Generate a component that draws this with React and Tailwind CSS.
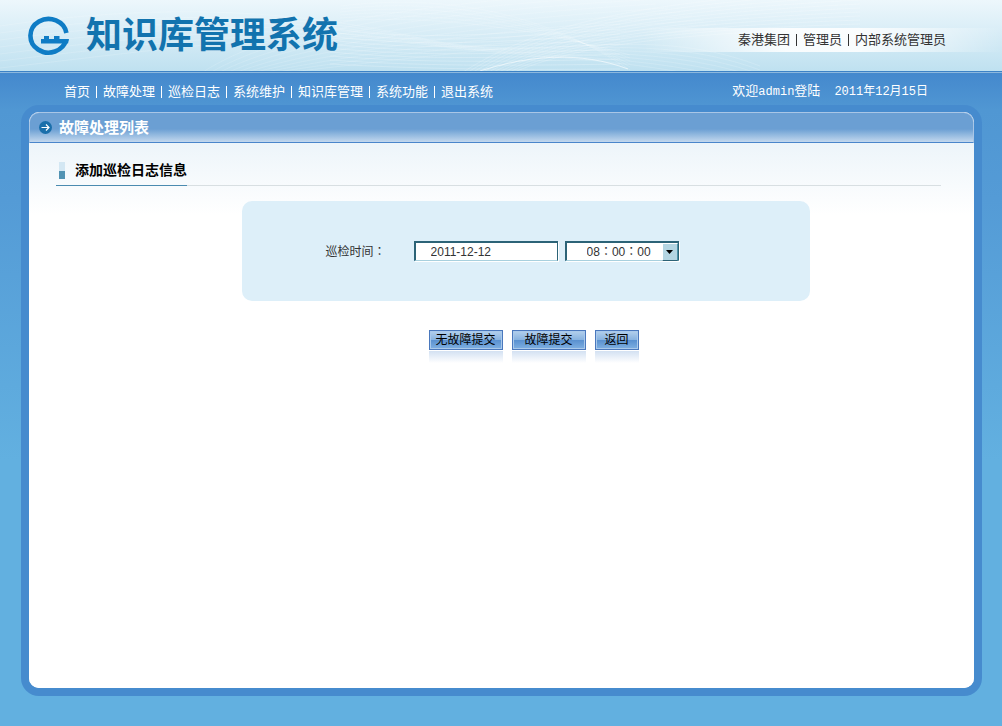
const CJK = 'font-["Liberation_Sans","Noto_Sans_CJK_SC",sans-serif]';

const NAV = ["首页", "故障处理", "巡检日志", "系统维护", "知识库管理", "系统功能", "退出系统"];
const ACCOUNT = ["秦港集团", "管理员", "内部系统管理员"];

function Waves() {
  const families = [
    { n: 7, d: (i) => `M0 ${26 + i * 7} C160 ${2 + i * 8} 300 ${10 + i * 3} 420 ${38 + i} S640 ${20 + i * 6} 760 ${66 + i * 4}`, o: 0.2 },
    { n: 10, d: (i) => `M${200 + i * 8} ${74} C${250 + i * 10} ${40 + i * 3} ${360 + i * 12} ${4 + i * 5} ${620 + i * 12} ${-8 + i * 4}`, o: 0.18 },
    { n: 11, d: (i) => `M${460 + i * 5} 74 C${540 + i * 4} ${22 + i * 2} ${640 + i * 6} ${2 + i * 3} 860 ${-12 + i * 4}`, o: 0.25 },
    { n: 10, d: (i) => `M330 ${28 + i * 4} C420 ${42 + i * 3} 500 ${34 + i * 4} 620 ${24 + i * 5}`, o: 0.28 },
    { n: 6, d: (i) => `M340 ${6 + i * 3} C440 ${-6 + i * 4} 540 ${10 + i * 4} 630 ${70 - i * 3}`, o: 0.18 },
  ];
  return (
    <svg aria-hidden="true" viewBox="0 0 1002 71" preserveAspectRatio="none" className="absolute inset-0 h-full w-full" fill="none" stroke="#fff">
      {families.map((f, k) =>
        Array.from({ length: f.n }, (_, i) => <path key={`${k}-${i}`} d={f.d(i)} strokeOpacity={f.o} strokeWidth="0.8" />)
      )}
      <path d="M480 71 C530 55 580 51 628 69" strokeOpacity="0.6" strokeWidth="1" />
    </svg>
  );
}

function Logo() {
  return (
    <svg aria-hidden="true" viewBox="0 0 42 40" className="h-10 w-[42px] shrink-0">
      <path d="M38.4 17 A18.1 16.8 0 1 0 38.2 23.5" fill="none" stroke="#0f7cc5" strokeWidth="4.6" />
      <path d="M13 23 H16 V20 H21 V23 H26 V20 H31.5 V23 H41 L40 27.5 H13 Z" fill="#0f7cc5" />
    </svg>
  );
}

function Separated({ items, label }) {
  return (
    <nav aria-label={label}>
      <ul className="flex items-center text-[13px] leading-4 whitespace-nowrap">
        {items.map((t, i) => (
          <li key={t} className="flex items-center">
            {i > 0 && <span className="mx-1.5 h-3 w-px bg-current" />}
            <a href="#" className="hover:underline">{t}</a>
          </li>
        ))}
      </ul>
    </nav>
  );
}

function GlossButton({ children, className }) {
  return (
    <div>
      <button
        type="button"
        className={`block h-5 border border-[#4a78bd] bg-[linear-gradient(#b4d0ec,#86b2e0_50%,#5a91d0_52%,#7fb0e2)] text-xs leading-4 text-black shadow-[inset_0_0_0_1px_#a9c9eb] ${className}`}
      >
        {children}
      </button>
      <div className="mt-px h-3 bg-linear-to-b from-[#d3e1f2] to-white" />
    </div>
  );
}

export default function App() {
  return (
    <div className={`flex min-h-screen flex-col bg-[#62b0e0] bg-[linear-gradient(#4488cd_72px,#5097d3_110px,#549bd6_200px,#62b0e0_460px)] ${CJK}`}>
      <header className="relative flex h-[71px] items-center justify-between bg-linear-to-b from-[#edf7fc] to-[#bfe1f0]">
        <Waves />
        <div className="relative flex items-center gap-4 pl-7">
          <Logo />
          <h1 className="text-4xl font-bold whitespace-nowrap text-[#1273ae]">知识库管理系统</h1>
        </div>
        <div className="relative mt-2 flex h-6 items-center bg-[linear-gradient(90deg,transparent,#ffffffe0_40%,#ffffffe0_60%,transparent)] pr-14 pl-24 text-[#333]">
          <Separated items={ACCOUNT} label="账户" />
        </div>
      </header>

      <div className="flex h-[34px] items-center justify-between border-t border-[#3d82c6] pt-1.5 pr-[74px] pl-16 text-white shadow-[inset_0_1px_0_#8db8dd]">
        <Separated items={NAV} label="主导航" />
        <div className="flex items-center gap-3.5 text-[13px] leading-4 whitespace-nowrap">
          <span>欢迎<span className='font-["Liberation_Mono",monospace] text-xs leading-4'>admin</span>登陆</span>
          <time dateTime="2011-12-15" className='font-["Liberation_Mono","Noto_Sans_CJK_SC",monospace] text-xs leading-[18px]'>2011年12月15日</time>
        </div>
      </div>

      <div className="mr-5 mb-[30px] ml-[21px] flex flex-1 flex-col rounded-[18px] bg-[#468bce] px-2 pt-[7px] pb-2">
        <main className="flex flex-1 flex-col overflow-hidden rounded-[10px] bg-white">
          <div className="flex h-[31px] items-center gap-[7px] rounded-t-[10px] border border-b-[#4a86cb] border-[#a9c6e6] bg-[linear-gradient(#6b9fd3_55%,#c3d8ee)] pl-[9px]">
            <svg aria-hidden="true" viewBox="0 0 13 13" className="size-[13px]" fill="none">
              <circle cx="6.5" cy="6.5" r="6.5" fill="#1a6fab" />
              <path d="M2.5 6.5H10M7 3.5l3 3-3 3" stroke="#fff" strokeWidth="1.2" />
            </svg>
            <h2 className="text-[15px] leading-5 font-bold text-white">故障处理列表</h2>
          </div>

          <div className="flex-1 bg-[linear-gradient(#edf5fa,#fff_72px)] pt-3">
            <div className="mr-[33px] ml-[27px] flex border-b border-[#d8dfe2]">
              <h3 className="-mb-px flex h-[31px] items-center gap-2.5 border-b border-[#4a8bb0] pl-[3px] text-sm font-bold text-black">
                <span className="h-[17px] w-1.5 bg-[linear-gradient(#d3e7f3_50%,#5293b3_50%)]" />
                添加巡检日志信息
              </h3>
            </div>

            <form onSubmit={(e) => e.preventDefault()}>
              <div className="mt-[15px] pl-12">
                <div className="mx-auto flex h-[100px] max-w-[568px] items-center rounded-[10px] bg-[#ddeff9] pl-[84px] text-xs text-[#333]">
                  <label htmlFor="date" className="mr-7 whitespace-nowrap">
                    巡检时间<span className='font-["Noto_Sans_CJK_TC",sans-serif]' lang="zh-TW">：</span>
                  </label>
                  <input
                    id="date"
                    type="text"
                    defaultValue="2011-12-12"
                    className="h-5 w-36 border-t-2 border-r border-b border-l-2 border-[#2c6377] border-b-[#a8d0de] bg-white pl-[15px] shadow-[1px_1px_0_#fff] outline-none"
                  />
                  <div className="relative ml-[7px]">
                    <select
                      aria-label="时间"
                      defaultValue="08"
                      lang="zh-TW"
                      className='h-5 w-[114px] appearance-none border-t-2 border-r border-b border-l-2 border-[#2c6377] border-b-[#a8d0de] bg-white pl-5 font-["Liberation_Sans","Noto_Sans_CJK_TC",sans-serif] shadow-[1px_1px_0_#fff] outline-none'
                    >
                      <option value="08">08：00：00</option>
                      <option value="12">12：00：00</option>
                      <option value="16">16：00：00</option>
                    </select>
                    <span className="pointer-events-none absolute top-0.5 right-px flex h-[18px] w-4 items-center justify-center border border-t-white border-r-[#4f93a8] border-b-[#2c6377] border-l-white bg-[#b4d5e2]">
                      <svg aria-hidden="true" viewBox="0 0 7 4" className="h-1 w-[7px]"><path d="M0 0h7L3.5 4z" /></svg>
                    </span>
                  </div>
                </div>
              </div>

              <div className="mt-[29px] flex justify-center gap-[9px] pl-16">
                <GlossButton className="w-[74px]">无故障提交</GlossButton>
                <GlossButton className="w-[74px]">故障提交</GlossButton>
                <GlossButton className="w-11">返回</GlossButton>
              </div>
            </form>
          </div>
        </main>
      </div>
    </div>
  );
}
